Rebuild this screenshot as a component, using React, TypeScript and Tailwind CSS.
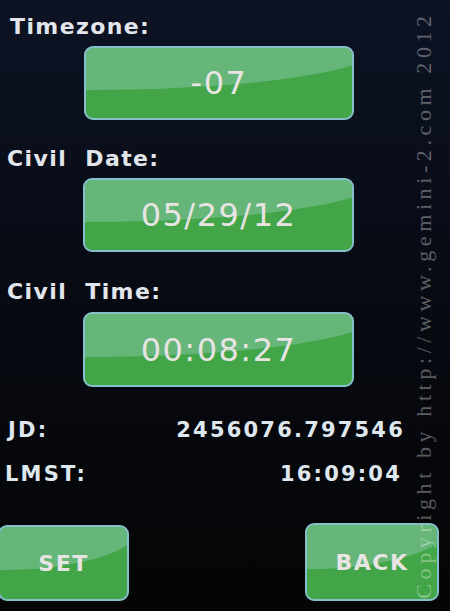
import React from "react"

const labelFont = { fontFamily: '"DejaVu Sans", Verdana, sans-serif' }

function GreenButton({ text, className, bold }: { text: string; className: string; bold?: boolean }) {
  return (
    <div
      className={`relative overflow-hidden rounded-[9px] border-2 border-[#84bfcb] bg-[#42a547] flex items-center justify-center ${className}`}
    >
      {/* gloss */}
      <div className="absolute left-[-110%] top-[-60%] w-[220%] h-[120%] rounded-[50%] bg-[#a9d6d6]/35" />
      <span
        style={labelFont}
        className={`relative text-[#e8e4e4] ${bold ? "font-bold text-[22px] tracking-[1.5px]" : "text-[32px] tracking-[1.5px]"}`}
      >
        {text}
      </span>
    </div>
  )
}

export default function App() {
  return (
    <div className="relative w-[450px] h-[611px] overflow-hidden bg-gradient-to-b from-[#0d1324] via-[#070a12] to-[#050506]">
      <div className="flex flex-col pt-[15px]" style={labelFont}>
        <div className="pl-[10px] leading-6 text-[22px] font-bold tracking-[1.4px] text-[#e2e6ec]">Timezone:</div>
        <GreenButton text="-07" className="ml-[84px] mt-[7px] w-[270px] h-[74px]" />

        <div className="pl-[7px] mt-[27px] leading-6 text-[22px] font-bold tracking-[1.4px] text-[#e2e6ec]">Civil&nbsp; Date:</div>
        <GreenButton text="05/29/12" className="ml-[83px] mt-[7px] w-[271px] h-[74px]" />

        <div className="pl-[7px] mt-[28px] leading-6 text-[22px] font-bold tracking-[1.4px] text-[#e2e6ec]">Civil&nbsp; Time:</div>
        <GreenButton text="00:08:27" className="ml-[83px] mt-[8px] w-[271px] h-[75px]" />

        <div className="mt-[31px] flex items-center justify-between pl-[8px] pr-[45px] leading-6 text-[21px] font-bold tracking-[2.2px] text-[#dfe7ee]">
          <span>JD:</span>
          <span>2456076.797546</span>
        </div>
        <div className="mt-[20px] flex items-center justify-between pl-[5px] pr-[48px] leading-6 text-[21px] font-bold tracking-[2.2px] text-[#dfe7ee]">
          <span>LMST:</span>
          <span>16:09:04</span>
        </div>

        <div className="mt-[37px] flex items-start justify-between pr-[11px]">
          <GreenButton text="SET" bold className="ml-[-2px] mt-[2px] w-[131px] h-[76px]" />
          <GreenButton text="BACK" bold className="w-[134px] h-[78px]" />
        </div>
      </div>

      {/* watermark */}
      <div
        className="absolute left-[423px] top-[305px] -translate-x-1/2 -translate-y-1/2 -rotate-90 whitespace-nowrap text-[22px] tracking-[4.6px] text-white/35"
        style={{ fontFamily: '"Liberation Serif", "Times New Roman", serif' }}
      >
        Copyright by http://www.gemini-2.com 2012
      </div>
    </div>
  )
}
